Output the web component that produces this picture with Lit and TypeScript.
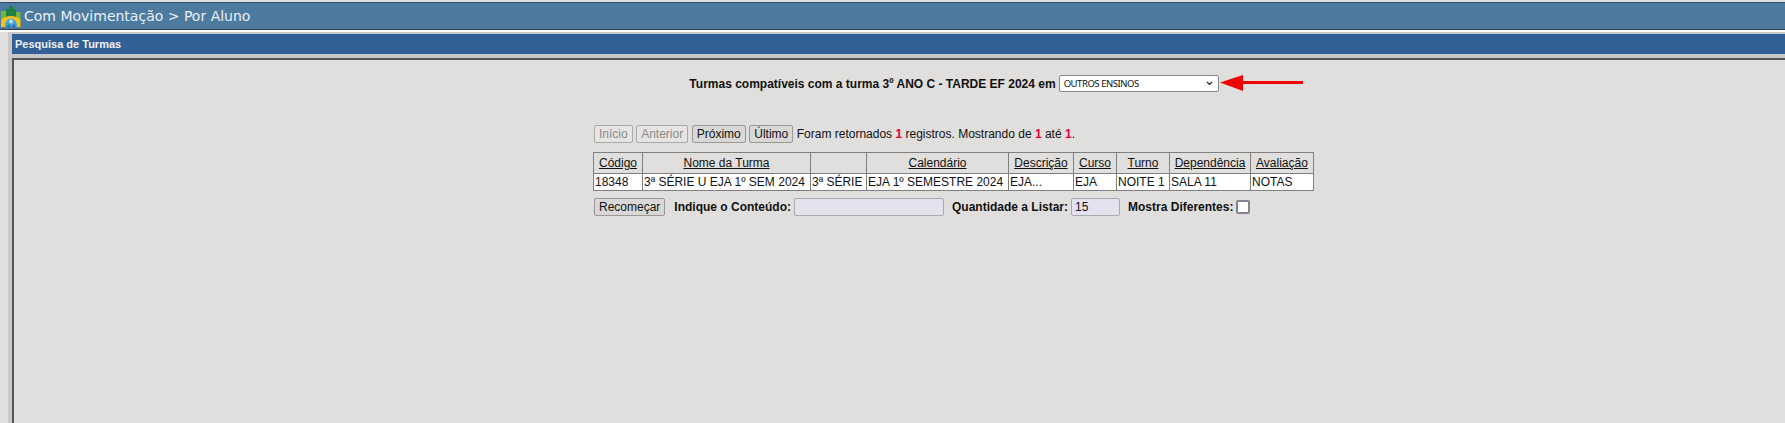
import { LitElement, html, css } from "lit";
import { customElement } from "lit/decorators.js";

@customElement("app-root")
export class AppRoot extends LitElement {
  static styles = css`
    :host { display: block; width: 1785px; height: 423px; overflow: hidden; background: #e0dfdd; font-family: "Liberation Sans", Arial, sans-serif; font-size: 12px; color: #111; }
    .top { margin-top: 2px; height: 26px; background: #4d7a9f; border-top: 1px solid #2f4d68; border-bottom: 1px solid #2f3f50; display: flex; align-items: center; color: #e8f0f6; font-family: "DejaVu Sans", sans-serif; font-size: 14px; gap: 3px; padding-left: 1px; }
    .top svg { display: block; }
    .gap { height: 2px; background: #fff; }
    .panel { margin-left: 8px; width: 1885px; border-left: 4px solid #c8c8c8; border-top: 2px solid #c8c8c8; }
    .head { height: 20px; background: #315f96; color: #f2f2f2; font-weight: bold; font-size: 11px; display: flex; align-items: center; padding-left: 3px; border-bottom: 4px solid #c8c8c8; }
    .body { position: relative; border-left: 2px solid #555; border-top: 2px solid #555; height: 400px; display: flex; flex-direction: column; align-items: center; }
    .search { margin-top: 15px; margin-right: 3px; height: 17px; display: flex; align-items: center; gap: 3px; font-weight: bold; }
    .sel { position: relative; }
    select { display: block; appearance: none; width: 160px; height: 17px; box-sizing: border-box; background: #fff; border: 1px solid #888; border-radius: 2px; font-family: "Noto Sans", sans-serif; font-size: 9.5px; letter-spacing: -0.45px; padding: 0 0 0 4px; color: #111; }
    .chev { position: absolute; right: 6px; top: 6px; }
    .arrow { position: absolute; left: 1206px; top: 15px; }
    .block { margin-top: 33px; margin-right: 4px; display: flex; flex-direction: column; align-items: flex-start; }
    .pager { display: flex; align-items: center; gap: 3.5px; height: 18px; margin-left: 1px; }
    button { height: 18px; padding: 0 4px; font: inherit; color: #111; background: #d9d8d6; border: 1px solid #999; border-radius: 2px; }
    button[disabled] { color: #8a8a8a; border-color: #aaa; background: #e6e5e3; }
    .r { color: #e8003c; font-weight: bold; }
    table { margin-top: 9px; border-collapse: collapse; table-layout: fixed; width: 720px; }
    th, td { border: 1px solid #808080; white-space: nowrap; overflow: hidden; }
    th { font-weight: normal; text-decoration: underline; height: 20px; padding: 0; text-align: center; }
    td { background: #fff; height: 16px; padding: 0 0 0 1px; }
    .foot { margin-top: 7px; margin-left: 1px; display: flex; align-items: center; }
    .foot b { margin-left: 8px; margin-right: 3px; }
    .foot b.first { margin-left: 9px; }
    input.t { height: 18px; box-sizing: border-box; background: #e4e2ee; border: 1px solid #aaa; border-radius: 2px; font: inherit; color: #111; padding: 0 3px; }
    .cb { width: 14px; height: 14px; box-sizing: border-box; background: #fff; border: 2px solid #85858f; border-radius: 2px; }
  `;

  render() {
    const widths = [49, 168, 56, 142, 65, 43, 53, 81, 63];
    const heads = ["Código", "Nome da Turma", "", "Calendário", "Descrição", "Curso", "Turno", "Dependência", "Avaliação"];
    const row = ["18348", "3ª SÉRIE U EJA 1º SEM 2024", "3ª SÉRIE", "EJA 1º SEMESTRE 2024", "EJA...", "EJA", "NOITE 1", "SALA 11", "NOTAS"];
    return html`
      <div class="top">
        <svg width="20" height="21" viewBox="0 0 20 21">
          <path fill="#6fb83a" d="M0 5h6v9H0zM14 6h5.500v8H14z"/>
          <path fill="#1f7f45" d="M5 3h3v10H5zM8 0h4v11H8zM12 3h3v10h-3z"/>
          <path fill="#f2c21a" d="M0 21v-7c3-3 6-4 10-4s7 1 9.500 4v7z"/>
          <path fill="#3aa3dc" d="M4 21c0-5 2.500-8.500 6-8.500s6 3.500 6 8.500z"/>
          <circle cx="10" cy="15.500" r="2" fill="#cfe9f6"/>
          <path fill="#1d6fa8" d="M6 21l1.500-3 2 3zM11 21l2-3 1.500 3z"/>
        </svg>
        <span>Com Movimentação &gt; Por Aluno</span>
      </div>
      <div class="gap"></div>
      <div class="panel">
        <div class="head">Pesquisa de Turmas</div>
        <div class="body">
          <div class="search">
            <span>Turmas compatíveis com a turma 3º ANO C - TARDE EF 2024 em</span>
            <div class="sel">
              <select><option>OUTROS ENSINOS</option></select>
              <svg class="chev" width="7" height="5" viewBox="0 0 7 5"><path d="M1 1l2.500 2.500L6 1" fill="none" stroke="#222" stroke-width="1.200"/></svg>
            </div>
          </div>
          <svg class="arrow" width="84" height="16" viewBox="0 0 84 16">
            <path fill="#f00000" d="M0 7.500 23 0v6h60v3H23v7z"/>
          </svg>
          <div class="block">
            <div class="pager">
              <button disabled>Início</button>
              <button disabled>Anterior</button>
              <button>Próximo</button>
              <button>Último</button>
              <span>Foram retornados <span class="r">1</span> registros. Mostrando de <span class="r">1</span> até <span class="r">1</span>.</span>
            </div>
            <table>
              <colgroup>${widths.map((w) => html`<col style="width:${w}px" />`)}</colgroup>
              <tr>${heads.map((h) => html`<th>${h}</th>`)}</tr>
              <tr>${row.map((c) => html`<td>${c}</td>`)}</tr>
            </table>
            <div class="foot">
              <button>Recomeçar</button>
              <b class="first">Indique o Conteúdo:</b>
              <input class="t" style="width:150px" />
              <b>Quantidade a Listar:</b>
              <input class="t" style="width:49px" value="15" />
              <b>Mostra Diferentes:</b>
              <div class="cb"></div>
            </div>
          </div>
        </div>
      </div>
    `;
  }
}
